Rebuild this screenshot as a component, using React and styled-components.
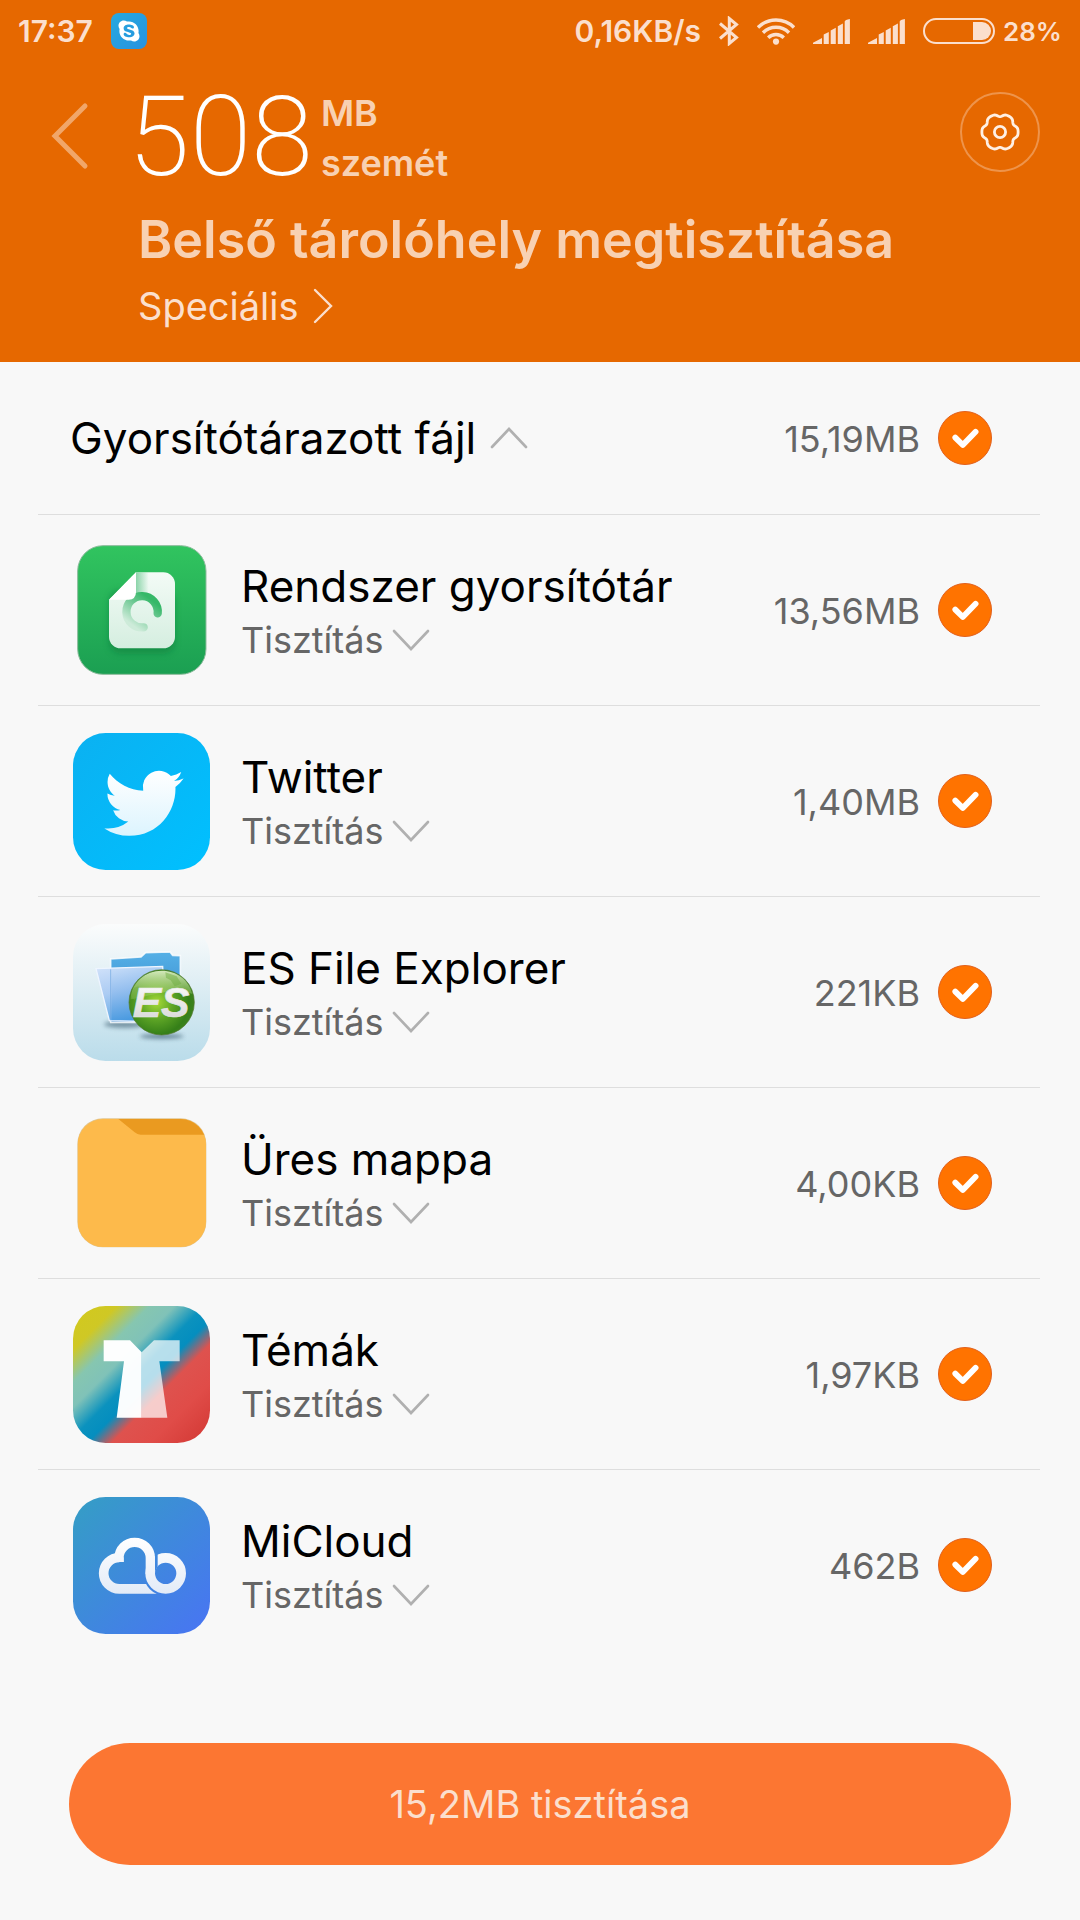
import { useState } from "react";
import styled, { createGlobalStyle, ThemeProvider } from "styled-components";
import { FaSkype } from "react-icons/fa";

const theme = {
  colors: {
    header: "#e66800",
    page: "#f8f8f8",
    line: "#dedede",
    text: "#000000",
    muted: "#666666",
    arrow: "#b0b0b0",
    check: "#ff7300",
    checkBorder: "#e2601c",
    action: "#fc7632",
    white: "#ffffff",
    light: "#fbdfcd",
    soft: "#f8d1b2",
  },
  fontSize: {
    xs: "26px",
    s: "30px",
    m: "36px",
    l: "38px",
    xl: "44px",
    xxl: "52px",
    huge: "112px",
  },
};

const GlobalStyle = createGlobalStyle`
  * {
    box-sizing: border-box;
  }
  body {
    margin: 0;
    font-family: Inter, "Liberation Sans", sans-serif;
    background: ${theme.colors.page};
  }
  button {
    margin: 0;
    padding: 0;
    border: none;
    background: none;
    font: inherit;
    color: inherit;
    cursor: pointer;
  }
  svg {
    display: block;
    flex-shrink: 0;
  }
`;

const Page = styled.div`
  min-height: 100vh;
  display: flex;
  flex-direction: column;
  color: ${p => p.theme.colors.text};
`;

const Header = styled.header`
  background: ${p => p.theme.colors.header};
  color: ${p => p.theme.colors.soft};
  padding-bottom: 26px;
`;

const StatusBar = styled.div`
  height: 62px;
  padding: 0 18px;
  display: flex;
  align-items: center;
  justify-content: space-between;
  font-size: ${p => p.theme.fontSize.s};
  font-weight: 600;
  color: ${p => p.theme.colors.light};
`;

const StatusGroup = styled.div`
  display: flex;
  align-items: center;
  gap: 18px;
`;

const SkypeBadge = styled.span`
  width: 36px;
  height: 36px;
  display: flex;
  align-items: center;
  justify-content: center;
  border-radius: 8px;
  background: linear-gradient(135deg, #27a9de, #2792df);
  color: ${p => p.theme.colors.white};
`;

const Battery = styled.span`
  display: flex;
  align-items: center;
  gap: 8px;
  font-size: ${p => p.theme.fontSize.xs};
`;

const HeaderBody = styled.div`
  display: grid;
  grid-template-columns: 78px 1fr auto;
  align-items: start;
  padding: 26px 40px 0 50px;
`;

const BackButton = styled.button`
  height: 96px;
  display: flex;
  align-items: center;
`;

const Summary = styled.div`
  display: flex;
  height: 100px;
  gap: 8px;
`;

const Amount = styled.span`
  font-family: Roboto, Inter, sans-serif;
  font-size: ${p => p.theme.fontSize.huge};
  font-weight: 200;
  line-height: 98px;
  color: ${p => p.theme.colors.white};
`;

const Unit = styled.span`
  display: flex;
  flex-direction: column;
  font-size: ${p => p.theme.fontSize.m};
  font-weight: 600;
  line-height: 50px;
`;

const Title = styled.h1`
  margin: 16px 0 0 10px;
  font-size: ${p => p.theme.fontSize.xxl};
  font-weight: 600;
  line-height: 72px;
`;

const AdvancedButton = styled.button`
  margin-left: 10px;
  display: flex;
  align-items: center;
  gap: 14px;
  font-size: ${p => p.theme.fontSize.l};
  line-height: 60px;
  color: ${p => p.theme.colors.light};
`;

const SettingsButton = styled.button`
  width: 80px;
  height: 80px;
  margin-top: 4px;
  display: flex;
  align-items: center;
  justify-content: center;
  border: 2px solid #ee944b;
  border-radius: 50%;
`;

const Main = styled.main`
  padding: 0 40px 0 38px;
`;

const Row = styled.div`
  height: ${p => p.$height};
  display: flex;
  align-items: center;
  padding: 0 48px 0 35px;
`;

const GroupRow = styled(Row)`
  padding-left: 32px;
`;

const List = styled.ul`
  list-style: none;
  margin: 0;
  padding: 0;
`;

const Item = styled.li`
  border-top: 1px solid ${p => p.theme.colors.line};
`;

const GroupTitle = styled.h2`
  flex: 1;
  margin: 0;
  font-size: ${p => p.theme.fontSize.xl};
  font-weight: 400;
`;

const GroupToggle = styled.button`
  display: flex;
  align-items: center;
  gap: 14px;
`;

const AppIcon = styled.span`
  width: 137px;
  display: flex;
  justify-content: center;
  margin-right: 31px;
`;

const Info = styled.div`
  flex: 1;
  min-width: 0;
`;

const Name = styled.label`
  display: block;
  font-size: ${p => p.theme.fontSize.xl};
  line-height: 60px;
`;

const CleanToggle = styled.button`
  display: flex;
  align-items: center;
  gap: 8px;
  font-size: ${p => p.theme.fontSize.m};
  line-height: 48px;
  color: ${p => p.theme.colors.muted};
`;

const Size = styled.span`
  padding-top: 2px;
  margin-right: 18px;
  font-size: ${p => p.theme.fontSize.m};
  color: ${p => p.theme.colors.muted};
`;

const CheckWrap = styled.span`
  display: grid;
  width: 54px;
  height: 54px;

  & > * {
    grid-area: 1 / 1;
  }

  & > svg {
    pointer-events: none;
  }
`;

const CheckInput = styled.input`
  appearance: none;
  width: 54px;
  height: 54px;
  margin: 0;
  border: 1px solid ${p => p.theme.colors.line};
  border-radius: 50%;
  background: ${p => p.theme.colors.white};

  &:checked {
    border-color: ${p => p.theme.colors.checkBorder};
    background: ${p => p.theme.colors.check};
  }
`;

const Footer = styled.footer`
  margin-top: auto;
  padding: 55px 69px;
`;

const CleanButton = styled.button`
  width: 100%;
  height: 122px;
  border-radius: 61px;
  background: ${p => p.theme.colors.action};
  font-size: ${p => p.theme.fontSize.l};
  color: ${p => p.theme.colors.light};
`;

const BluetoothIcon = () => (
  <svg width="20" height="30" viewBox="0 0 20 30" fill="none" stroke="currentColor" strokeWidth="3">
    <path d="M1 7.5 17.5 21.5 10.3 27.5V2.5L17.5 8.5 1 22.5" />
  </svg>
);

const WifiIcon = () => (
  <svg width="38" height="28" viewBox="0 0 38 28" fill="none" stroke="currentColor" strokeWidth="3.4">
    <path d="M1 10.5a25.5 25.5 0 0 1 36 0" />
    <path d="M6 15.7a18.4 18.4 0 0 1 26 0" />
    <path d="M11.2 20.8a11 11 0 0 1 15.6 0" />
    <circle cx="19" cy="24.6" r="3.1" fill="currentColor" stroke="none" />
  </svg>
);

const SignalIcon = () => (
  <svg width="37" height="25" viewBox="0 0 37 25" fill="currentColor">
    <path d="M0 25V23.8L9 19V25ZM10.7 25V15.6L15.8 13V25ZM17.7 25V11.6L22.8 8.8V25ZM24.8 25V7.2L29.9 4.6V25ZM31.7 25V2.4Q32 1 36.9 0V25Z" />
  </svg>
);

const BatteryIcon = () => (
  <svg width="72" height="26" viewBox="0 0 72 26" fill="none">
    <rect x="1" y="1" width="70" height="24" rx="12" stroke="currentColor" strokeWidth="2" />
    <path d="M50 4h9a9 9 0 0 1 0 18h-9z" fill="currentColor" />
  </svg>
);

// outline of a soft six-tooth cog around 0,0
const cogPath =
  Array.from({ length: 90 }, (_, i) => {
    const a = (i * Math.PI) / 45;
    const r = 17.1 + 1.4 * Math.cos(6 * a) - 0.4 * Math.cos(12 * a);
    return `${i ? "L" : "M"}${(r * Math.cos(a)).toFixed(2)} ${(r * Math.sin(a)).toFixed(2)}`;
  }).join("") + "Z";

const CogIcon = () => (
  <svg width="40" height="40" viewBox="-20 -20 40 40" fill="none" stroke="#fff0e4" strokeWidth="2.8">
    <path d={cogPath} />
    <circle r="5.6" />
  </svg>
);

const Chevron = ({ up }) => (
  <svg width="38" height="22" viewBox="0 0 38 22" fill="none" stroke={theme.colors.arrow} strokeWidth="2.6" strokeLinecap="round">
    <path d={up ? "M2 20 19 2 36 20" : "M2 2 19 20 36 2"} />
  </svg>
);

const CheckMark = () => (
  <svg width="54" height="54" viewBox="0 0 54 54" fill="none" stroke="#fff" strokeWidth="5.8" strokeLinecap="round" strokeLinejoin="round">
    <path d="M17.3 26.6 24.8 34 37.6 20.8" />
  </svg>
);

const SystemIcon = () => (
  <svg width="130" height="130" viewBox="51 44 390 390">
    <defs>
      <linearGradient id="sysBg" x2="0" y2="1">
        <stop stopColor="#31c45f" />
        <stop offset="1" stopColor="#1b9f52" />
      </linearGradient>
      <linearGradient id="sysDoc" x2="0" y2="1">
        <stop stopColor="#f3fbf6" />
        <stop offset="1" stopColor="#d5eee0" />
      </linearGradient>
      <linearGradient id="sysRing" x1="0.9" y1="0.2" x2="0.3" y2="1">
        <stop stopColor="#35b868" />
        <stop offset="0.4" stopColor="#6fc994" />
        <stop offset="1" stopColor="#cdebd9" />
      </linearGradient>
      <linearGradient id="sysFold" x2="1" y2="0">
        <stop stopColor="#5fc488" stopOpacity="0.7" />
        <stop offset="1" stopColor="#5fc488" stopOpacity="0" />
      </linearGradient>
      <filter id="sysShadow" x="-20%" y="-20%" width="140%" height="140%">
        <feGaussianBlur stdDeviation="10" />
      </filter>
    </defs>
    <rect x="53" y="46" width="385" height="386" rx="76" fill="url(#sysBg)" stroke="#8dbb9c" strokeWidth="3" />
    <rect x="147" y="180" width="198" height="190" rx="35" fill="#0d7a3b" opacity="0.5" filter="url(#sysShadow)" />
    <path d="M228 126H310a35 35 0 0 1 35 35V319a35 35 0 0 1-35 35H182a35 35 0 0 1-35-35V208Z" fill="url(#sysDoc)" />
    <path d="M228 126h38v70h-38z" fill="url(#sysFold)" />
    <path d="M293 249a47 47 0 1 0-42 42" fill="none" stroke="url(#sysRing)" strokeWidth="25" strokeLinecap="round" />
    <path d="M228 126 147 208H206Q228 207 228 184Z" fill="#fff" />
  </svg>
);

const TwitterIcon = () => (
  <svg width="137" height="137" viewBox="40 37 411 411">
    <defs>
      <linearGradient id="twBg" x2="1" y2="1">
        <stop stopColor="#0bb1f1" />
        <stop offset="1" stopColor="#00c0ff" />
      </linearGradient>
      <linearGradient id="twBird" x2="0" y2="1">
        <stop stopColor="#ffffff" />
        <stop offset="1" stopColor="#dcf4fe" />
      </linearGradient>
    </defs>
    <rect x="40" y="37" width="411" height="411" rx="98" fill="url(#twBg)" />
    <path
      transform="translate(134 127.7) scale(9.9 10)"
      fill="url(#twBird)"
      d="M23.953 4.57a10 10 0 01-2.825.775 4.958 4.958 0 002.163-2.723c-.951.555-2.005.959-3.127 1.184a4.92 4.92 0 00-8.384 4.482C7.69 8.095 4.067 6.13 1.64 3.162a4.822 4.822 0 00-.666 2.475c0 1.71.87 3.213 2.188 4.096a4.904 4.904 0 01-2.228-.616v.06a4.923 4.923 0 003.946 4.827 4.996 4.996 0 01-2.212.085 4.936 4.936 0 004.604 3.417 9.867 9.867 0 01-6.102 2.105c-.39 0-.779-.023-1.17-.067a13.995 13.995 0 007.557 2.209c9.053 0 13.998-7.496 13.998-13.985 0-.21 0-.42-.015-.63A9.935 9.935 0 0024 4.59z"
    />
  </svg>
);

const EsIcon = () => (
  <svg width="137" height="137" viewBox="40 40 411 411">
    <defs>
      <linearGradient id="esBg" x2="0" y2="1">
        <stop stopColor="#fbfcfc" />
        <stop offset="1" stopColor="#badcea" />
      </linearGradient>
      <linearGradient id="esBack" x2="0" y2="1">
        <stop stopColor="#55b0e6" />
        <stop offset="1" stopColor="#3180c8" />
      </linearGradient>
      <linearGradient id="esFront" x1="0" y1="0" x2="0.3" y2="1">
        <stop stopColor="#d3e3fa" />
        <stop offset="0.5" stopColor="#a3c6f3" stopOpacity="0.85" />
        <stop offset="1" stopColor="#4f9fe4" stopOpacity="0.85" />
      </linearGradient>
      <radialGradient id="esBall" cx="0.42" cy="0.5" r="0.62">
        <stop stopColor="#a6da38" />
        <stop offset="0.4" stopColor="#5fa626" />
        <stop offset="0.8" stopColor="#357f18" />
        <stop offset="1" stopColor="#3f8420" />
      </radialGradient>
      <linearGradient id="esShine" x2="0" y2="1">
        <stop stopColor="#e6f5cf" stopOpacity="0.9" />
        <stop offset="1" stopColor="#b5dc78" stopOpacity="0.2" />
      </linearGradient>
      <linearGradient id="esLetters" x2="0" y2="1">
        <stop stopColor="#ffffff" />
        <stop offset="1" stopColor="#d4d4d4" />
      </linearGradient>
      <filter id="esBlur" x="-20%" y="-100%" width="140%" height="300%">
        <feGaussianBlur stdDeviation="6" />
      </filter>
    </defs>
    <rect x="40" y="40" width="411" height="411" rx="98" fill="url(#esBg)" />
    <ellipse cx="195" cy="341" rx="62" ry="11" fill="#35566b" opacity="0.55" filter="url(#esBlur)" />
    <ellipse cx="306" cy="377" rx="66" ry="7" fill="#35566b" opacity="0.7" filter="url(#esBlur)" />
    <path d="M153 145 244 139 258 126 331 124 339 134 362 135V335H153Z" fill="url(#esBack)" stroke="#fff" strokeWidth="5" strokeOpacity="0.8" />
    <path d="M109 174 309 167 318 334 149 330Z" fill="url(#esFront)" stroke="#eef5ff" strokeWidth="4" />
    <path d="M153 176V325" stroke="#6aa5e0" strokeWidth="2" />
    <circle cx="306" cy="275" r="98" fill="url(#esBall)" stroke="#54752f" strokeWidth="2" />
    <path d="M213 266C214 215 258 180 306 180c46 0 82 28 92 70-50-22-120 4-185 16Z" fill="url(#esShine)" />
    <path d="M317 185l34 12 14 22-20 8-12-18-14-8ZM222 233l14-6 4 18-14 22-10-4Z" fill="#6fae42" opacity="0.5" />
    <text
      x="219"
      y="318"
      fill="url(#esLetters)"
      stroke="#e6e6e6"
      strokeWidth="2"
      fontFamily="Liberation Sans, sans-serif"
      fontWeight="700"
      fontStyle="italic"
      fontSize="128"
    >
      ES
    </text>
  </svg>
);

const FolderIcon = () => (
  <svg width="130" height="130" viewBox="51 54 390 390">
    <defs>
      <clipPath id="folderClip">
        <rect x="53" y="57" width="385" height="384" rx="76" />
      </clipPath>
    </defs>
    <rect x="52" y="55" width="387" height="387" rx="77" fill="#e0c590" />
    <g clipPath="url(#folderClip)">
      <path d="M53 57H438V441H53Z" fill="#fdba4b" />
      <path d="M175 57H438V104H242Q232 104 224 97Z" fill="#ea9a20" />
    </g>
  </svg>
);

const ThemesIcon = () => (
  <svg width="137" height="137" viewBox="40 45 411 411">
    <defs>
      <linearGradient id="thBg" x2="1" y2="1">
        <stop stopColor="#d3c91b" />
        <stop offset="0.16" stopColor="#cfc825" />
        <stop offset="0.28" stopColor="#86c6b0" />
        <stop offset="0.37" stopColor="#80c2b8" />
        <stop offset="0.48" stopColor="#0b92be" />
        <stop offset="0.55" stopColor="#048ebf" />
        <stop offset="0.64" stopColor="#de524e" />
        <stop offset="0.78" stopColor="#e04c48" />
        <stop offset="1" stopColor="#d23733" />
      </linearGradient>
    </defs>
    <rect x="40" y="45" width="411" height="411" rx="98" fill="url(#thBg)" />
    <path d="M132 148H211L246 184V380H171L193 211H132Z" fill="#fff" fillOpacity="0.98" />
    <path d="M246 184 283 148H360V211H299L323 380H246Z" fill="#fff" fillOpacity="0.71" />
  </svg>
);

const CloudIcon = () => (
  <svg width="137" height="137" viewBox="40 48 411 411" fill="none">
    <defs>
      <linearGradient id="clBg" gradientUnits="userSpaceOnUse" x1="70" y1="78" x2="421" y2="429">
        <stop stopColor="#369bc8" />
        <stop offset="1" stopColor="#4777f0" />
      </linearGradient>
      <linearGradient id="clWhite" gradientUnits="userSpaceOnUse" x1="0" y1="168" x2="0" y2="338">
        <stop stopColor="#ffffff" />
        <stop offset="1" stopColor="#e3ebf7" />
      </linearGradient>
    </defs>
    <rect x="40" y="48" width="411" height="411" rx="98" fill="url(#clBg)" />
    <path d="M292 323.500H179a46.500 46.500 0 0 1 0-94" stroke="url(#clWhite)" strokeWidth="29" />
    <circle cx="318" cy="277" r="51" stroke="url(#clBg)" strokeWidth="32" />
    <circle cx="318" cy="277" r="46.500" stroke="url(#clWhite)" strokeWidth="29" />
    <path d="M286 212h8v44q-4 6-8 18Z" fill="url(#clBg)" />
    <path d="M176 229H192V243H176Z" fill="url(#clWhite)" />
    <path d="M178 243v-12a47 47 0 0 1 94 0v48" stroke="url(#clWhite)" strokeWidth="28" />
  </svg>
);

const apps = [
  { id: "system", name: "Rendszer gyorsítótár", size: "13,56MB", Icon: SystemIcon },
  { id: "twitter", name: "Twitter", size: "1,40MB", Icon: TwitterIcon },
  { id: "es", name: "ES File Explorer", size: "221KB", Icon: EsIcon },
  { id: "empty", name: "Üres mappa", size: "4,00KB", Icon: FolderIcon },
  { id: "themes", name: "Témák", size: "1,97KB", Icon: ThemesIcon },
  { id: "micloud", name: "MiCloud", size: "462B", Icon: CloudIcon },
];

const Check = ({ checked, ...rest }) => (
  <CheckWrap>
    <CheckInput type="checkbox" checked={checked} {...rest} />
    {checked && <CheckMark />}
  </CheckWrap>
);

const AppRow = ({ app, checked, onToggle }) => {
  const { id, name, size, Icon } = app;
  return (
    <Item>
      <Row $height="190px">
        <AppIcon>
          <Icon />
        </AppIcon>
        <Info>
          <Name htmlFor={id}>{name}</Name>
          <CleanToggle type="button">
            Tisztítás
            <Chevron />
          </CleanToggle>
        </Info>
        <Size>{size}</Size>
        <Check id={id} checked={checked} onChange={() => onToggle(id)} />
      </Row>
    </Item>
  );
};

const App = () => {
  const [selected, setSelected] = useState(apps.map(app => app.id));
  const allSelected = selected.length === apps.length;

  const toggle = id =>
    setSelected(prev => (prev.includes(id) ? prev.filter(el => el !== id) : [...prev, id]));

  return (
    <ThemeProvider theme={theme}>
      <GlobalStyle />
      <Page>
        <Header>
          <StatusBar>
            <StatusGroup>
              <span>17:37</span>
              <SkypeBadge>
                <FaSkype size={24} />
              </SkypeBadge>
            </StatusGroup>
            <StatusGroup>
              <span>0,16KB/s</span>
              <BluetoothIcon />
              <WifiIcon />
              <SignalIcon />
              <SignalIcon />
              <Battery>
                <BatteryIcon />
                28%
              </Battery>
            </StatusGroup>
          </StatusBar>
          <HeaderBody>
            <BackButton type="button" aria-label="Vissza">
              <svg width="40" height="68" viewBox="0 0 40 68" fill="none" stroke="#f1a669" strokeWidth="5" strokeLinecap="round">
                <path d="M35 4 5 34 35 64" />
              </svg>
            </BackButton>
            <div>
              <Summary>
                <Amount>508</Amount>
                <Unit>
                  <span>MB</span>
                  <span>szemét</span>
                </Unit>
              </Summary>
              <Title>Belső tárolóhely megtisztítása</Title>
              <AdvancedButton type="button">
                Speciális
                <svg width="20" height="36" viewBox="0 0 20 36" fill="none" stroke="currentColor" strokeWidth="2.4" strokeLinecap="round">
                  <path d="M2 2 18 18 2 34" />
                </svg>
              </AdvancedButton>
            </div>
            <SettingsButton type="button" aria-label="Beállítások">
              <CogIcon />
            </SettingsButton>
          </HeaderBody>
        </Header>

        <Main>
          <GroupRow $height="152px">
            <GroupTitle>
              <GroupToggle type="button">
                Gyorsítótárazott fájl
                <Chevron up />
              </GroupToggle>
            </GroupTitle>
            <Size>15,19MB</Size>
            <Check
              aria-label="Gyorsítótárazott fájl"
              checked={allSelected}
              onChange={() => setSelected(allSelected ? [] : apps.map(app => app.id))}
            />
          </GroupRow>
          <List>
            {apps.map(app => (
              <AppRow key={app.id} app={app} checked={selected.includes(app.id)} onToggle={toggle} />
            ))}
          </List>
        </Main>

        <Footer>
          <CleanButton type="button">15,2MB tisztítása</CleanButton>
        </Footer>
      </Page>
    </ThemeProvider>
  );
};

export default App;
